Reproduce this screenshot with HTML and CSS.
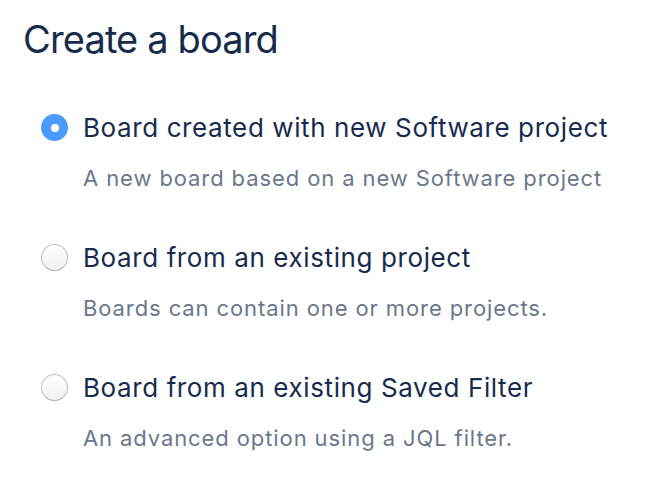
FILE: index.html
```html
<!DOCTYPE html>
<html>
<head>
<meta charset="utf-8">
<link rel="stylesheet" href="styles.css">
</head>
<body>
<div class="page">
  <h1 class="title">Create a board</h1>
  <div class="options">
    <div class="option">
      <span class="radio radio-checked"></span>
      <div class="option-text">
        <div class="option-label">Board created with new Software project</div>
        <div class="option-desc">A new board based on a new Software project</div>
      </div>
    </div>
    <div class="option">
      <span class="radio"></span>
      <div class="option-text">
        <div class="option-label">Board from an existing project</div>
        <div class="option-desc">Boards can contain one or more projects.</div>
      </div>
    </div>
    <div class="option">
      <span class="radio"></span>
      <div class="option-text">
        <div class="option-label">Board from an existing Saved Filter</div>
        <div class="option-desc">An advanced option using a JQL filter.</div>
      </div>
    </div>
  </div>
</div>
</body>
</html>
```
FILE: styles.css
```css
html, body {
  margin: 0;
  padding: 0;
  background: #ffffff;
}
.page {
  padding: 16px 0 0 23px;
  font-family: Inter, "Noto Sans", sans-serif;
}
.title {
  margin: 0;
  font-size: 38px;
  font-weight: 400;
  line-height: 46px;
  letter-spacing: -0.85px;
  color: #172B4D;
}
.options {
  display: flex;
  flex-direction: column;
  gap: 50px;
  margin-top: 50px;
  padding-left: 18px;
}
.option {
  display: flex;
  align-items: flex-start;
  gap: 15px;
}
.radio {
  flex: none;
  width: 27px;
  height: 27px;
  box-sizing: border-box;
  border-radius: 50%;
  margin-top: 2px;
  border: 1.5px solid #c2c2c2;
  border-bottom-color: #b4b4b4;
  background: linear-gradient(#ffffff, #f1f1f1);
  box-shadow: 0 0.5px 1px rgba(0, 0, 0, 0.1);
  position: relative;
}
.radio-checked {
  border: none;
  box-shadow: none;
  background: #4a9bff;
}
.radio-checked::after {
  content: "";
  position: absolute;
  left: 50%;
  top: 50%;
  width: 8px;
  height: 8px;
  margin: -4px 0 0 -4px;
  border-radius: 50%;
  background: #ffffff;
}
.option-label {
  font-size: 26px;
  line-height: 32px;
  letter-spacing: 0.6px;
  color: #172B4D;
}
.option-desc {
  margin-top: 20px;
  font-size: 22px;
  line-height: 28px;
  letter-spacing: 0.9px;
  color: #6B778C;
}
```
